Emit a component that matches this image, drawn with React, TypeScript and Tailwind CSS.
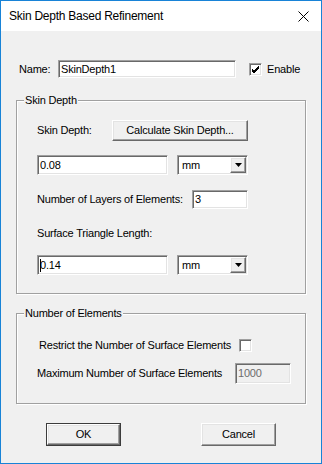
import React from 'react';

const sunken =
  'border border-t-[#a0a0a0] border-l-[#a0a0a0] border-b-white border-r-white shadow-[inset_1px_1px_0_#696969,inset_-1px_-1px_0_#e3e3e3]';
const raised =
  'border border-t-white border-l-white border-b-[#696969] border-r-[#696969] shadow-[inset_-1px_-1px_0_#a0a0a0,inset_1px_1px_0_#e3e3e3]';

function TextBox({ value, className = '', caret = false }: { value: string; className?: string; caret?: boolean }) {
  return (
    <div className={`relative flex items-center bg-white pl-[2px] ${sunken} ${className}`}>
      <span className="leading-[13px]">{value}</span>
      {caret && <span className="absolute left-[2px] top-[3px] h-[13px] w-px bg-black" />}
    </div>
  );
}

function UnitSelect() {
  return (
    <div className={`flex w-[71px] h-[20px] items-center bg-white ${sunken}`}>
      <span className="ml-[4px] flex-1 leading-[13px]">mm</span>
      <div className={`mr-[1px] flex h-[16px] w-[16px] items-center justify-center bg-[#f0f0f0] ${raised}`}>
        <svg width="7" height="4" viewBox="0 0 7 4">
          <path d="M0 0h7L3.5 4z" fill="#000" />
        </svg>
      </div>
    </div>
  );
}

function CheckBox({ checked = false }: { checked?: boolean }) {
  return (
    <div className={`flex h-[13px] w-[13px] items-center justify-center bg-white ${sunken}`}>
      {checked && (
        <svg width="9" height="9" viewBox="0 0 9 9">
          <path d="M1 4l2 2 5-5M1 5l2 2 5-5M1 6l2 2 5-5" stroke="#000" strokeWidth="1" fill="none" />
        </svg>
      )}
    </div>
  );
}

function PushButton({ label, isDefault = false, className = '' }: { label: string; isDefault?: boolean; className?: string }) {
  if (isDefault) {
    return (
      <div className={`border border-[#3c3c3c] ${className}`}>
        <div className={`flex h-full w-full items-center justify-center bg-[#f0f0f0] ${raised}`}>{label}</div>
      </div>
    );
  }
  return <div className={`flex items-center justify-center bg-[#f0f0f0] ${raised} ${className}`}>{label}</div>;
}

function GroupBox({ title, className = '', children }: { title: string; className?: string; children: React.ReactNode }) {
  return (
    <div className={`relative ml-[15px] w-[290px] border border-[#a0a0a0] shadow-[inset_1px_1px_0_#fff,1px_1px_0_#fff] ${className}`}>
      <span className="absolute -top-[7px] left-[7px] bg-[#f0f0f0] px-[1px] leading-[13px]">{title}</span>
      {children}
    </div>
  );
}

export default function App() {
  return (
    <div className="h-[464px] w-[322px] border border-[#1883d7] bg-[#f0f0f0] font-['Liberation_Sans',Arial,sans-serif] text-[11px] tracking-[-0.2px] text-black">
      {/* Title bar */}
      <div className="flex h-[30px] items-center justify-between bg-white pl-[8px] pr-[12px]">
        <span className="text-[12px] tracking-[-0.25px]">Skin Depth Based Refinement</span>
        <svg width="11" height="11" viewBox="0 0 11 11">
          <path d="M0.5 0.5l10 10M10.5 0.5l-10 10" stroke="#000" strokeWidth="1" />
        </svg>
      </div>

      <div className="pt-[29px]">
        {/* Name row */}
        <div className="flex h-[18px] items-center">
          <span className="ml-[18px] w-[39px] leading-[13px]">Name:</span>
          <TextBox value="SkinDepth1" className="h-[18px] w-[178px]" />
          <div className="ml-[13px]">
            <CheckBox checked />
          </div>
          <span className="ml-[5px] leading-[13px]">Enable</span>
        </div>

        {/* Skin Depth group */}
        <GroupBox title="Skin Depth" className="mt-[22px] h-[194px]">
          <div className="pl-[20px] pt-[19px]">
            <div className="flex items-center">
              <span className="w-[75px] leading-[13px]">Skin Depth:</span>
              <PushButton label="Calculate Skin Depth..." className="h-[21px] w-[136px]" />
            </div>
            <div className="mt-[14px] flex items-center">
              <TextBox value="0.08" className="h-[20px] w-[131px]" />
              <div className="ml-[9px]">
                <UnitSelect />
              </div>
            </div>
            <div className="mt-[15px] flex items-center">
              <span className="w-[155px] leading-[13px]">Number of Layers of Elements:</span>
              <TextBox value="3" className="h-[19px] w-[56px]" />
            </div>
            <div className="mt-[18px] h-[13px] leading-[13px]">Surface Triangle Length:</div>
            <div className="mt-[15px] flex items-center">
              <TextBox value="0.14" caret className="h-[20px] w-[131px]" />
              <div className="ml-[9px]">
                <UnitSelect />
              </div>
            </div>
          </div>
        </GroupBox>

        {/* Number of Elements group */}
        <GroupBox title="Number of Elements" className="mt-[19px] h-[91px]">
          <div className="pt-[25px]">
            <div className="flex h-[13px] items-center pl-[22px]">
              <span className="w-[200px] leading-[13px]">Restrict the Number of Surface Elements</span>
              <CheckBox />
            </div>
            <div className="mt-[11px] flex items-center pl-[20px]">
              <span className="w-[198px] leading-[13px]">Maximum Number of Surface Elements</span>
              <div className={`flex h-[21px] w-[56px] items-center bg-[#f0f0f0] pl-[2px] text-[#6d6d6d] ${sunken}`}>
                <span className="leading-[13px]">1000</span>
              </div>
            </div>
          </div>
        </GroupBox>

        {/* Dialog buttons */}
        <div className="mt-[19px] flex">
          <PushButton label="OK" isDefault className="ml-[45px] h-[23px] w-[75px]" />
          <PushButton label="Cancel" className="ml-[80px] h-[23px] w-[75px]" />
        </div>
      </div>
    </div>
  );
}
